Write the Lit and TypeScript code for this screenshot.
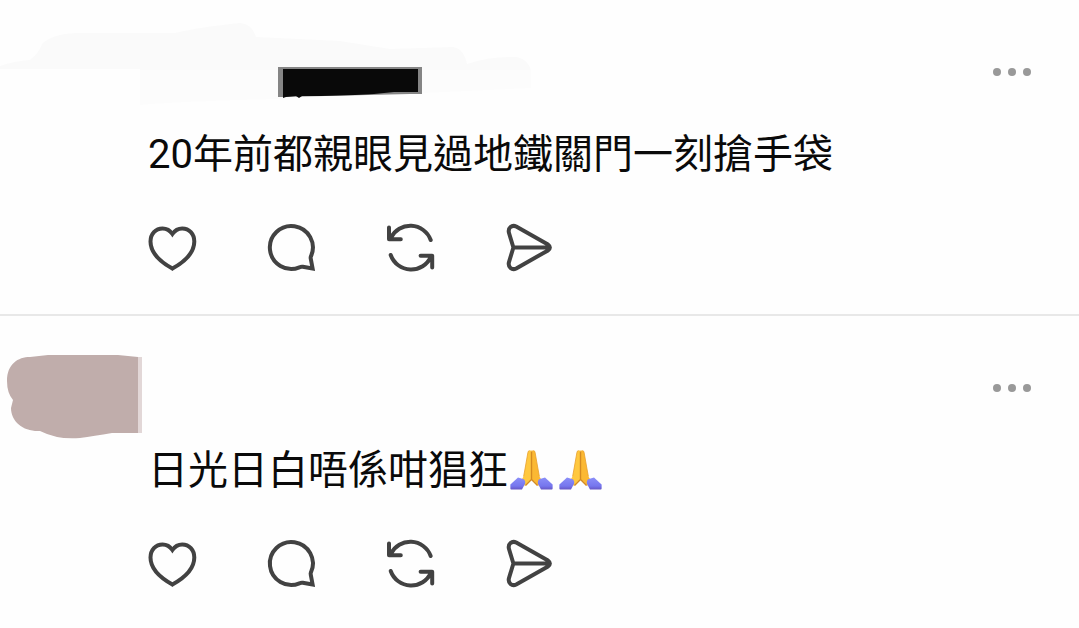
import { LitElement, html, css, svg, nothing } from "lit";
import { customElement, property } from "lit/decorators.js";

const icons = {
  Like: svg`<path stroke-linejoin="miter" d="M24.4 10C22 6.4 18.6 4.4 14.6 4.4C7.6 4.4 2.5 10 2.5 17.6C2.5 28.6 11.8 37.6 24.4 44.6C37 37.6 46.3 28.6 46.3 17.6C46.3 10 41.2 4.4 34.2 4.4C30.2 4.4 26.8 6.4 24.4 10Z"/>`,
  Reply: svg`<path stroke-linejoin="miter" d="M42.8 35Q42.4 33.4 43 32.2A21.5 21.5 0 1 0 31.4 43.4Q33 42.4 34.8 42.7L44.6 44.5Z"/>`,
  Repost: svg`<path d="M1 3.4V15.2H12.8M2.8 14A21.7 21.7 0 0 1 42.7 16M2.7 31A21.7 21.7 0 0 0 43 32.6M32.6 31.8H44.2V43.4"/>`,
  Share: svg`<path d="M5.4 23.5L1 9C-.4 4 4 .4 8.2 2.6L40 20.6Q43.8 23.5 40 26.4L8.2 44.4C4 46.6-.4 43 1 38ZM5.4 23.5H41.4"/>`,
};

@customElement("praying-hands")
class PrayingHands extends LitElement {
  static styles = css`
    :host { display: inline-block; width: 49px; height: 42px; }
    svg { display: block; width: 49px; height: 42px; }
  `;
  render() {
    return html`<svg viewBox="0 0 49 42" role="img" aria-label="🙏">
      <defs>
        <linearGradient id="cuff" x1="0" y1="0" x2="0" y2="1">
          <stop offset="0" stop-color="#8a8ef8" /><stop offset="0.7" stop-color="#7676ee" /><stop offset="1" stop-color="#6556c4" />
        </linearGradient>
      </defs>
      <path fill="#ffc83f" d="M23.5 1.5H21.5Q20.2 1.6 19.9 3.5L17 20L15.6 27.5L14 30L16.8 37.2Q19.5 33 23.5 30.8Z" />
      <path fill="#fbb833" d="M23.5 1.5H25.5Q26.8 1.6 27.1 3.5L30 20L31.4 27.5L33 30L30.2 37.2Q27.5 33 23.5 30.8Z" />
      <path fill="none" stroke="#d48a22" stroke-width="1.4" d="M23.5 2.5V30.5L17.5 36.5M23.5 30.5L29.5 36.5" />
      <path fill="none" stroke="#e9a02c" stroke-width="0.8" d="M21.5 1.6Q20.2 1.7 19.9 3.5L17 20L15.6 27.5M25.5 1.6Q26.8 1.7 27.1 3.5L30 20L31.4 27.5" />
      <path fill="url(#cuff)" d="M10 28.6L16 30.2Q17.6 32 17.2 34.5L14 40.6H3.2Q2.4 40.4 2.4 39.5V35.6Z" />
      <path fill="url(#cuff)" d="M37 28.6L31 30.2Q29.4 32 29.8 34.5L33 40.6H43.8Q44.6 40.4 44.6 39.5V35.6Z" />
    </svg>`;
  }
}

@customElement("thread-post")
class ThreadPost extends LitElement {
  @property() text = "";
  @property({ type: Number }) hands = 0;

  static styles = css`
    :host { display: block; }
    article { padding: 60px 48px 0 148px; }
    header { display: flex; justify-content: flex-end; }
    button { border: 0; padding: 0; background: none; color: #424242; cursor: pointer; }
    .more { display: flex; align-items: center; gap: 7px; height: 24px; }
    .dot { width: 8px; height: 8px; border-radius: 50%; background: #999; }
    p {
      margin: 43px 0 41px;
      font: 400 40px/56px Roboto, "Noto Sans CJK TC", sans-serif;
      color: #0a0a0a;
    }
    .hands { display: inline-flex; vertical-align: -7px; }
    .actions { display: flex; gap: 72px; }
    .action, .action svg { display: block; width: 48px; height: 48px; }
    .action svg {
      overflow: visible;
      fill: none;
      stroke: currentColor;
      stroke-width: 4;
      stroke-linecap: round;
      stroke-linejoin: round;
    }
  `;

  render() {
    return html`<article>
      <header>
        <button class="more" aria-label="More">
          <span class="dot"></span><span class="dot"></span><span class="dot"></span>
        </button>
      </header>
      <p>${this.text}${this.hands
        ? html`<span class="hands">${Array.from({ length: this.hands }, () => html`<praying-hands></praying-hands>`)}</span>`
        : nothing}</p>
      <div class="actions">
        ${Object.entries(icons).map(([name, icon]) => html`
          <button class="action" aria-label=${name}><svg viewBox="0 0 48 48">${icon}</svg></button>`)}
      </div>
    </article>`;
  }
}

@customElement("app-root")
class AppRoot extends LitElement {
  static styles = css`
    :host { display: block; min-height: 100vh; background: #fefefe; }
    main { padding-bottom: 24px; }
    .item { position: relative; }
    .item + .item { margin-top: 42px; border-top: 2px solid #e8e8e8; }
    .marks { position: absolute; top: 0; left: 0; pointer-events: none; }
  `;

  render() {
    return html`<main>
      <div class="item">
        <thread-post text="20年前都親眼見過地鐵關門一刻搶手袋"></thread-post>
        <svg class="marks" width="540" height="112" aria-hidden="true">
          <path fill="#fafafa" d="M0 69V66Q14 61 30 60Q39 53 42 44Q52 34 76 33L175 33Q200 27 240 23Q252 24 256 37L340 41L390 49L453 47Q464 49 467 64Q490 56 517 57Q529 60 531 71H140V69Z" />
          <path fill="#fcfcfc" d="M140 70H531V88L422 93L278 99Q190 101 140 105Z" />
          <path fill="#858585" d="M278 67H422V94L410 94L283 97H278Z" />
          <path fill="#090909" d="M283 69H418V92H394L374 94L355 95L321 96H302L299 98L296 96L286 97L283 98Z" />
        </svg>
      </div>
      <div class="item">
        <thread-post text="日光日白唔係咁猖狂" .hands=${2}></thread-post>
        <svg class="marks" width="150" height="130" aria-hidden="true">
          <path fill="#e2d7d7" d="M136 41H142V117H136Z" />
          <path fill="#c0adab" d="M7 65C7 48 18 41 30 41L48 39H118L138 41V117H112Q94 120 80 122Q58 124 40 115C24 116 11 106 11 92L13 84Q7 77 7 65Z" />
        </svg>
      </div>
    </main>`;
  }
}
